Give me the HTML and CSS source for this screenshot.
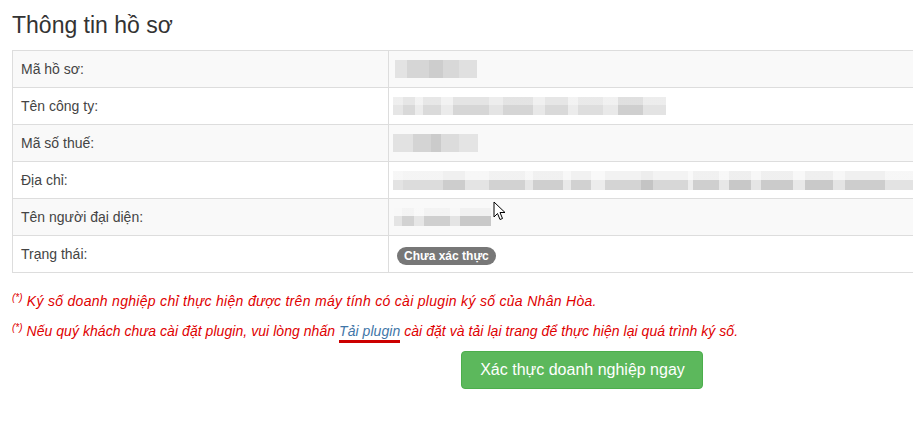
FILE: index.html
```html
<!DOCTYPE html>
<html lang="vi">
<head>
<meta charset="utf-8">
<title>Thông tin hồ sơ</title>
<link rel="stylesheet" href="styles.css">
</head>
<body>
<div class="page">
  <h3 class="title">Thông tin hồ sơ</h3>
  <table class="info">
    <tbody>
      <tr><td class="label">Mã hồ sơ:</td><td class="value"><span class="blur v-code"></span></td></tr>
      <tr><td class="label">Tên công ty:</td><td class="value"><span class="blur v-company"></span></td></tr>
      <tr><td class="label">Mã số thuế:</td><td class="value"><span class="blur v-tax"></span></td></tr>
      <tr><td class="label">Địa chỉ:</td><td class="value"><span class="blur v-address"></span></td></tr>
      <tr><td class="label">Tên người đại diện:</td><td class="value"><span class="blur v-person"></span></td></tr>
      <tr><td class="label">Trạng thái:</td><td class="value"><span class="badge">Chưa xác thực</span></td></tr>
    </tbody>
  </table>
  <p class="note note-first"><sup>(*)</sup> Ký số doanh nghiệp chỉ thực hiện được trên máy tính có cài plugin ký số của Nhân Hòa.</p>
  <p class="note note-second"><sup>(*)</sup> Nếu quý khách chưa cài đặt plugin, vui lòng nhấn <a class="plugin-link" href="#">Tải plugin</a> cài đặt và tải lại trang để thực hiện lại quá trình ký số.</p>
  <div class="actions">
    <button class="btn-verify" type="button">Xác thực doanh nghiệp ngay</button>
  </div>
</div>
<svg class="cursor" width="14" height="21" viewBox="0 0 14 21" aria-hidden="true">
  <path d="M1 1 L1 16 L4.5 12.5 L7 18.5 L9.5 17.5 L7 11.5 L12 11.5 Z" fill="#fff" stroke="#000" stroke-width="1" stroke-linejoin="miter"/>
</svg>
</body>
</html>
```

FILE: styles.css
```css
html, body {
  margin: 0;
  padding: 0;
  overflow: hidden;
  background: #fff;
}

body {
  font-family: "Liberation Sans", Arial, sans-serif;
  font-size: 14px;
  line-height: 20px;
  color: #333;
  position: relative;
  height: 424px;
}

.page {
  width: 1140px;
  padding-left: 12px;
}

.title {
  margin: 0;
  padding-top: 11px;
  font-size: 23px;
  font-weight: normal;
  line-height: 28px;
  color: #333;
  height: 39px;
}

.info {
  width: 100%;
  border-collapse: collapse;
  border: 1px solid #ddd;
  margin-bottom: 18px;
}

.info td {
  border: 1px solid #ddd;
  padding: 8px;
  line-height: 20px;
  vertical-align: middle;
  height: 20px;
}

.info tr:nth-child(odd) td {
  background: #f9f9f9;
}

.label {
  width: 359px;
  color: #444;
}

.value {
  color: #333;
}

.blur {
  display: block;
  height: 18px;
}

.v-code {
  width: 82px;
  margin-left: -2px;
  background:
    linear-gradient(90deg, #e3e3e3 0 12px, #d6d6d6 12px 34px, #cdcdcd 34px 48px, #d8d8d8 48px 64px, #e0e0e0 64px 82px);
}

.v-company {
  width: 273px;
  margin-left: -4px;
  background:
    linear-gradient(180deg, rgba(255,255,255,0.35) 0 8px, rgba(255,255,255,0) 8px),
    linear-gradient(90deg, #e6e6e6 0 10px, #d9d9d9 10px 22px, #ececec 22px 30px, #dadada 30px 48px, #ebebeb 48px 60px, #d6d6d6 60px 96px, #e4e4e4 96px 110px, #d5d5d5 110px 140px, #e8e8e8 140px 152px, #d9d9d9 152px 175px, #ececec 175px 185px, #dedede 185px 210px, #e9e9e9 210px 225px, #cfcfcf 225px 250px, #e3e3e3 250px 273px);
}

.v-tax {
  width: 85px;
  margin-left: -4px;
  background:
    linear-gradient(90deg, #e2e2e2 0 20px, #d4d4d4 20px 38px, #cbcbcb 38px 48px, #dcdcdc 48px 66px, #e4e4e4 66px 85px);
}

.v-address {
  width: 530px;
  margin-left: -4px;
  height: 19px;
  background:
    linear-gradient(180deg, rgba(255,255,255,0.7) 0 9px, rgba(255,255,255,0) 9px),
    linear-gradient(90deg, #e3e3e3 0 10px, #dcdcdc 10px 50px, #cdcdcd 50px 72px, #e4e4e4 72px 96px, #d2d2d2 96px 132px, #e6e6e6 132px 140px, #cfcfcf 140px 170px, #e9e9e9 170px 178px, #d1d1d1 178px 198px, #ececec 198px 212px, #d4d4d4 212px 248px, #c4c4c4 248px 260px, #d7d7d7 260px 295px, #ececec 295px 300px, #cfcfcf 300px 326px, #e7e7e7 326px 336px, #c8c8c8 336px 358px, #e5e5e5 358px 368px, #cbcbcb 368px 400px, #e8e8e8 400px 412px, #c9c9c9 412px 440px, #e4e4e4 440px 452px, #cdcdcd 452px 492px, #e3e3e3 492px 530px);
}

.v-person {
  width: 97px;
  margin-left: -3px;
  background:
    linear-gradient(180deg, rgba(255,255,255,0.75) 0 8px, rgba(255,255,255,0) 8px),
    linear-gradient(90deg, #e4e4e4 0 8px, #d2d2d2 8px 20px, #e6e6e6 20px 30px, #cfcfcf 30px 56px, #e4e4e4 56px 66px, #c9c9c9 66px 97px);
}

.badge {
  display: inline-block;
  padding: 3px 7px;
  font-size: 12px;
  font-weight: bold;
  line-height: 12px;
  color: #fff;
  background: #777;
  border-radius: 10px;
  vertical-align: middle;
  position: relative;
  top: 1px;
}

.note {
  margin: 0 0 10px;
  font-size: 14px;
  line-height: 20px;
  font-style: italic;
  color: #e00000;
  width: 901px;
}

.note-first {
  letter-spacing: 0.3px;
}

.note-second {
  letter-spacing: 0.05px;
}

.note sup {
  font-size: 10px;
  line-height: 0;
  vertical-align: 5px;
  letter-spacing: 0;
}

.plugin-link {
  color: #3f76a8;
  text-decoration: none;
  border-bottom: 3px solid #cc0000;
  padding-bottom: 1px;
}

.actions {
  text-align: center;
  padding-top: 0;
}

.btn-verify {
  font-family: "Liberation Sans", Arial, sans-serif;
  font-size: 16px;
  line-height: 20px;
  padding: 8px 17px 8px 18px;
  color: #fff;
  background: #5cb85c;
  border: 1px solid #4cae4c;
  border-radius: 4px;
  cursor: pointer;
}

.cursor {
  position: absolute;
  left: 493px;
  top: 201px;
}
```
